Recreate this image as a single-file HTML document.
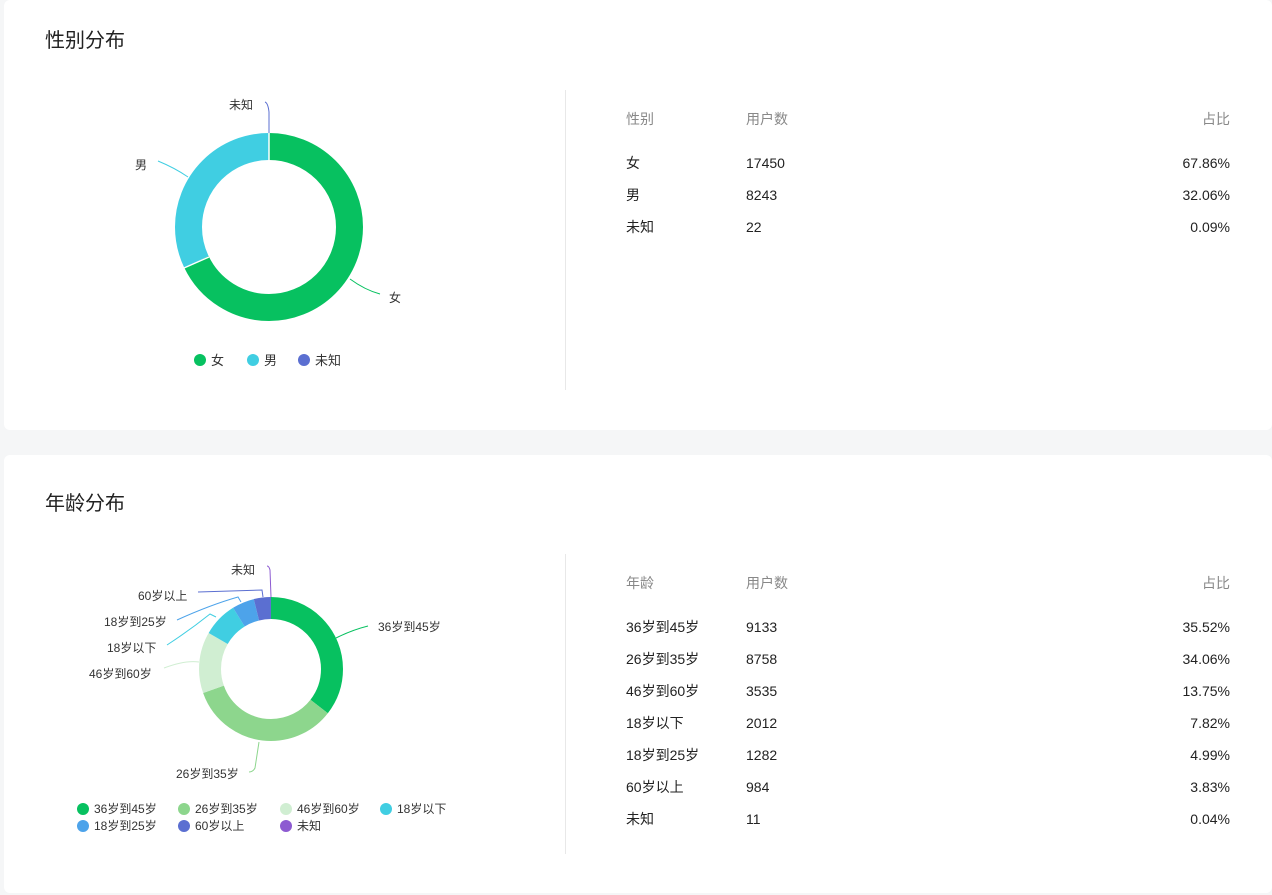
<!DOCTYPE html>
<html><head><meta charset="utf-8"><style>
*{margin:0;padding:0;box-sizing:border-box}
body{width:1272px;height:895px;background:#f5f6f7;font-family:"Liberation Sans","Noto Sans CJK SC",sans-serif;position:relative;overflow:hidden;color:#222}
.card{position:absolute;left:4px;width:1268px;background:#fff;border-radius:6px}
h2{position:absolute;left:41px;font-size:20px;font-weight:normal;color:#222;line-height:28px}
.div{position:absolute;left:561px;width:1px;background:#e8e8e8}
.row{position:absolute;left:622px;width:604px;font-size:14px;height:20px;line-height:20px}
.row span{position:absolute;top:0;line-height:20px;height:20px}
.row .a{left:0}.row .b{left:120px}.row .c{right:0}
.hd{color:#888}
svg text{font-family:"Liberation Sans","Noto Sans CJK SC",sans-serif;font-size:12px;fill:#333}
</style></head><body>
<div class="card" style="top:0;height:430px">
<h2 style="top:27px">性别分布</h2>
<div class="div" style="top:90px;height:300px"></div>
<div class="row hd" style="top:109px"><span class="a">性别</span><span class="b">用户数</span><span class="c">占比</span></div>
<div class="row" style="top:153px"><span class="a">女</span><span class="b">17450</span><span class="c">67.86%</span></div>
<div class="row" style="top:185px"><span class="a">男</span><span class="b">8243</span><span class="c">32.06%</span></div>
<div class="row" style="top:217px"><span class="a">未知</span><span class="b">22</span><span class="c">0.09%</span></div>
</div>
<div class="card" style="top:455px;height:438px">
<h2 style="top:35px">年龄分布</h2>
<div class="div" style="top:99px;height:300px"></div>
<div class="row hd" style="top:118px"><span class="a">年龄</span><span class="b">用户数</span><span class="c">占比</span></div>
<div class="row" style="top:162px"><span class="a">36岁到45岁</span><span class="b">9133</span><span class="c">35.52%</span></div>
<div class="row" style="top:194px"><span class="a">26岁到35岁</span><span class="b">8758</span><span class="c">34.06%</span></div>
<div class="row" style="top:226px"><span class="a">46岁到60岁</span><span class="b">3535</span><span class="c">13.75%</span></div>
<div class="row" style="top:258px"><span class="a">18岁以下</span><span class="b">2012</span><span class="c">7.82%</span></div>
<div class="row" style="top:290px"><span class="a">18岁到25岁</span><span class="b">1282</span><span class="c">4.99%</span></div>
<div class="row" style="top:322px"><span class="a">60岁以上</span><span class="b">984</span><span class="c">3.83%</span></div>
<div class="row" style="top:354px"><span class="a">未知</span><span class="b">11</span><span class="c">0.04%</span></div>
</div>
<svg width="1272" height="895" style="position:absolute;left:0;top:0">
<g transform="translate(269,227) rotate(-90)" fill="none" stroke-width="27">
<circle r="80.5" stroke="#07c160" stroke-dasharray="343.2 600" stroke-dashoffset="0"/>
<circle r="80.5" stroke="#40cee2" stroke-dasharray="162.2 600" stroke-dashoffset="-343.2"/>
<circle r="80.5" stroke="#5b6fd1" stroke-dasharray="0.5 600" stroke-dashoffset="-505.4"/>
</g>
<line x1="269" y1="133" x2="269" y2="161" stroke="#fff" stroke-width="1.5"/>
<line x1="184" y1="268" x2="209" y2="257" stroke="#fff" stroke-width="1.5"/>
<path d="M350 279 Q365 290 380 294" stroke="#07c160" fill="none"/>
<path d="M188 177 Q175 168 158 161" stroke="#40cee2" fill="none"/>
<path d="M269 133 L269 112 Q268 103 265 102" stroke="#5b6fd1" fill="none"/>
<text x="389" y="302">女</text>
<text x="135" y="169">男</text>
<text x="229" y="109">未知</text>
<circle cx="200" cy="360" r="6" fill="#07c160"/><text x="211" y="365" style="font-size:13px">女</text>
<circle cx="253" cy="360" r="6" fill="#40cee2"/><text x="264" y="365" style="font-size:13px">男</text>
<circle cx="304" cy="360" r="6" fill="#5b6fd1"/><text x="315" y="365" style="font-size:13px">未知</text>
<g transform="translate(271,669) rotate(-90)" fill="none" stroke-width="22">
<circle r="61" stroke="#07c160" stroke-dasharray="136.1 600" stroke-dashoffset="0"/>
<circle r="61" stroke="#8dd68d" stroke-dasharray="130.5 600" stroke-dashoffset="-136.1"/>
<circle r="61" stroke="#d0eed2" stroke-dasharray="52.7 600" stroke-dashoffset="-266.6"/>
<circle r="61" stroke="#40cee2" stroke-dasharray="30.0 600" stroke-dashoffset="-319.3"/>
<circle r="61" stroke="#4da3ea" stroke-dasharray="19.1 600" stroke-dashoffset="-349.3"/>
<circle r="61" stroke="#5b6fd1" stroke-dasharray="14.7 600" stroke-dashoffset="-368.4"/>
<circle r="61" stroke="#8d5bd1" stroke-dasharray="0.3 600" stroke-dashoffset="-383.1"/>
</g>
<path d="M336 638 Q352 630 368 626" stroke="#07c160" fill="none"/>
<path d="M259 742 L255 768 Q253 772 249 772" stroke="#8dd68d" fill="none"/>
<path d="M199 662 Q185 660 164 668" stroke="#d0eed2" fill="none"/>
<path d="M216 617 L210 614 Q190 630 167 645" stroke="#40cee2" fill="none"/>
<path d="M241 602 L238 597 Q210 605 177 620" stroke="#4da3ea" fill="none"/>
<path d="M263 597 L262 590 L198 592" stroke="#5b6fd1" fill="none"/>
<path d="M271 597 L270 570 Q269 566 267 566" stroke="#8d5bd1" fill="none"/>
<text x="378" y="631">36岁到45岁</text>
<text x="176" y="778">26岁到35岁</text>
<text x="89" y="678">46岁到60岁</text>
<text x="107" y="652">18岁以下</text>
<text x="104" y="626">18岁到25岁</text>
<text x="138" y="600">60岁以上</text>
<text x="231" y="574">未知</text>
<circle cx="83" cy="809" r="6" fill="#07c160"/><text x="94" y="813">36岁到45岁</text>
<circle cx="184" cy="809" r="6" fill="#8dd68d"/><text x="195" y="813">26岁到35岁</text>
<circle cx="286" cy="809" r="6" fill="#d0eed2"/><text x="297" y="813">46岁到60岁</text>
<circle cx="386" cy="809" r="6" fill="#40cee2"/><text x="397" y="813">18岁以下</text>
<circle cx="83" cy="826" r="6" fill="#4da3ea"/><text x="94" y="830">18岁到25岁</text>
<circle cx="184" cy="826" r="6" fill="#5b6fd1"/><text x="195" y="830">60岁以上</text>
<circle cx="286" cy="826" r="6" fill="#8d5bd1"/><text x="297" y="830">未知</text>
</svg>
</body></html>
